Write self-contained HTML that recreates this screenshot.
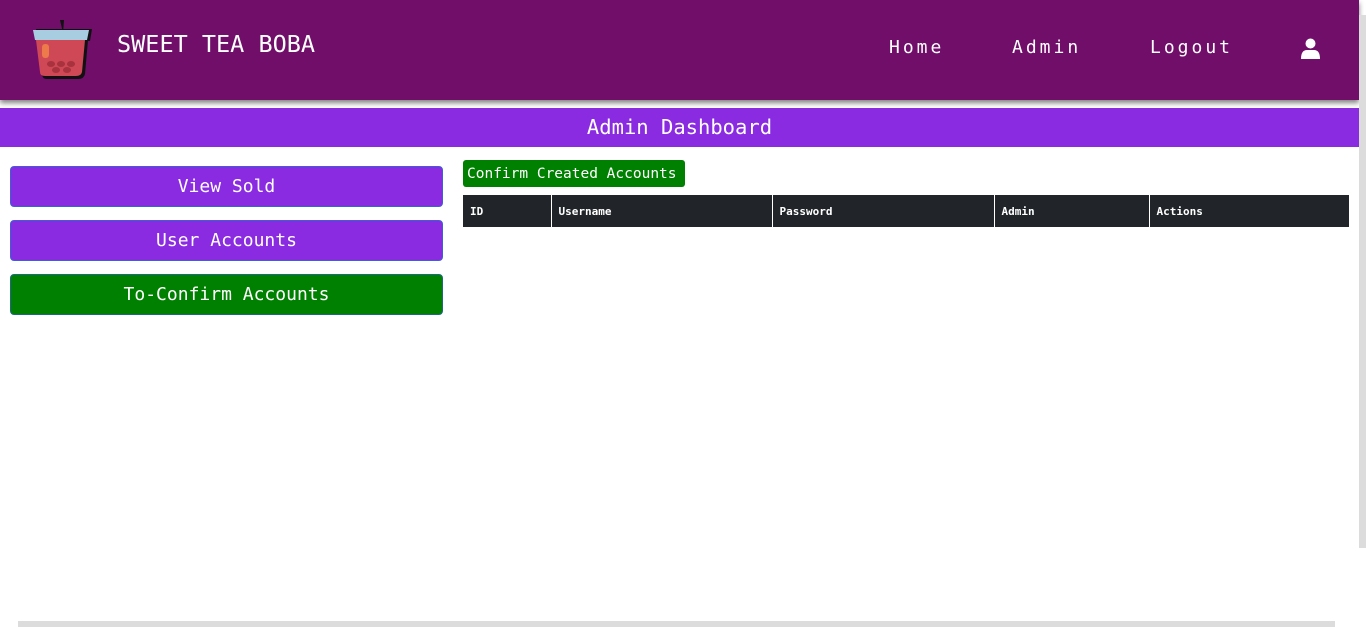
<!DOCTYPE html>
<html><head><meta charset="utf-8">
<style>
*{margin:0;padding:0;box-sizing:border-box}
body{width:1366px;height:627px;overflow:hidden;background:#fff;font-family:"DejaVu Sans Mono","Liberation Mono",monospace;position:relative}
.hdr{position:absolute;left:0;top:0;width:1359px;height:100px;background:#710e6a;box-shadow:0 3px 5px rgba(0,0,0,.5)}
.brand{position:absolute;left:117px;top:30px;color:#fff;font-size:23.5px}
.nav{position:absolute;top:37px;color:#fff;font-size:18px;letter-spacing:3px}
.banner{position:absolute;left:0;top:108px;width:1359px;height:39px;background:#8a2be2;color:#fff;font-size:20.5px;text-align:center;line-height:39px}
.btn{position:absolute;left:10px;width:433px;height:41px;border-radius:4px;border:1px solid #3d5fd6;color:#fff;font-size:18px;text-align:center;line-height:40px}
.p{background:#8a2be2}.g{background:#008000;border-color:#1b6a80}
.cca{position:absolute;left:463px;top:160px;width:222px;height:27px;background:#008000;border-radius:3px;color:#fff;font-size:14.5px;line-height:28px;padding-left:4px}
table{position:absolute;left:463px;top:195px;width:886px;border-collapse:collapse;background:#212529;color:#fff;font-family:"DejaVu Sans Mono",monospace;font-size:11px;font-weight:bold}
td{height:32px;padding-left:7px;border-left:1px solid #fff}
td:first-child{border-left:none}
.sb{position:absolute;background:#dcdcdc}
</style></head><body>
<div class="hdr">
<svg style="position:absolute;left:32px;top:18px" width="62" height="62" viewBox="0 0 62 62">
<path d="M28 2 L32 2 L31 15 Z" fill="#111"/>
<path d="M4 11 L60 11 L58 23 L6 23 Z" fill="#111"/>
<path d="M1 12 L57 12 L55 22 L3 22 Z" fill="#a9cde0"/>
<path d="M6 22 L56 22 L53 56 Q52 61 46 61 L15 61 Q10 61 10 56 Z" fill="#111"/>
<path d="M4 22 L53 22 L50 54 Q49 58 44 58 L13 58 Q8 58 8 54 Z" fill="#cf4856"/>
<rect x="10" y="26" width="7" height="14" rx="3" fill="#ec7a4a"/>
<ellipse cx="19" cy="46" rx="4" ry="3" fill="#a8323d"/><ellipse cx="29" cy="46" rx="4" ry="3" fill="#a8323d"/><ellipse cx="39" cy="46" rx="4" ry="3" fill="#a8323d"/>
<ellipse cx="24" cy="52" rx="4" ry="3" fill="#a8323d"/><ellipse cx="35" cy="52" rx="4" ry="3" fill="#a8323d"/>
</svg>
<div class="brand">SWEET TEA BOBA</div>
<div class="nav" style="left:889px">Home</div>
<div class="nav" style="left:1012px">Admin</div>
<div class="nav" style="left:1150px">Logout</div>
<svg style="position:absolute;left:1300px;top:38px" width="21" height="21" viewBox="0 0 21 21"><circle cx="10.5" cy="5.5" r="5" fill="#fff"/><path d="M1 21 Q1 12 7 12 L14 12 Q20 12 20 21 Z" fill="#fff"/></svg>
</div>
<div class="banner">Admin Dashboard</div>
<div class="btn p" style="top:166px">View Sold</div>
<div class="btn p" style="top:220px">User Accounts</div>
<div class="btn g" style="top:274px">To-Confirm Accounts</div>
<div class="cca">Confirm Created Accounts</div>
<table><tr><td style="width:88px">ID</td><td style="width:221px">Username</td><td style="width:222px">Password</td><td style="width:155px">Admin</td><td>Actions</td></tr></table>
<div class="sb" style="left:1359px;top:15px;width:7px;height:533px"></div>
<div class="sb" style="left:18px;top:621px;width:1317px;height:6px"></div>
</body></html>
